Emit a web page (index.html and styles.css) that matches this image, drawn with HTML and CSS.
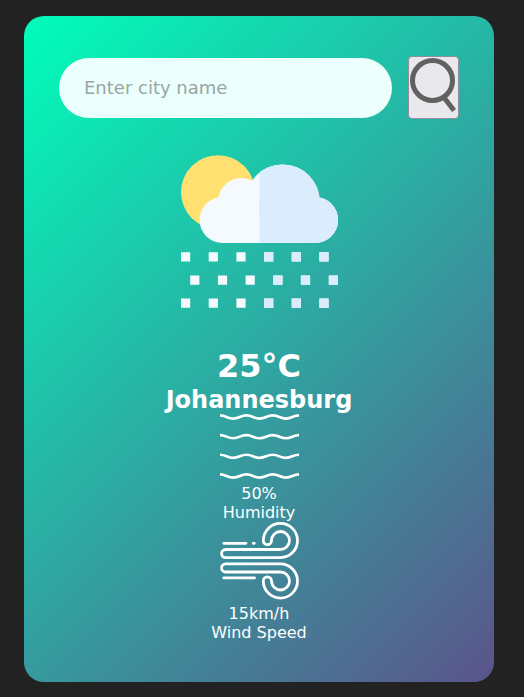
FILE: index.html
```
<!DOCTYPE html>
<html lang="en">
<head>
<meta charset="utf-8">
<title>Weather</title>
<link rel="stylesheet" href="styles.css">
</head>
<body>
<main class="card">
  <form class="search">
    <input class="search-input" type="text" placeholder="Enter city name">
    <button class="search-button" type="button" aria-label="Search">
      <svg width="49" height="61" viewBox="409 57 49 61" fill="none" stroke="#616161" stroke-width="5">
        <circle cx="432.5" cy="80.5" r="20"/>
        <path d="M444 97.5 454 110.5"/>
      </svg>
    </button>
  </form>
  <section class="weather">
    <svg class="weather-icon" viewBox="181 155 157 153">
      <defs>
        <clipPath id="right"><rect x="259.5" y="150" width="90" height="170"/></clipPath>
        <g id="rain">
          <circle cx="222.5" cy="220" r="23"/>
          <circle cx="241.2" cy="201.3" r="23.2"/>
          <circle cx="282.6" cy="201.7" r="37.2"/>
          <circle cx="315.2" cy="220" r="22.9"/>
          <rect x="222.5" y="205" width="93" height="38"/>
          <path d="M181 252.3h9.2v9.3h-9.2zM208.7 252.3h9.2v9.3h-9.2zM236.4 252.3h9.2v9.3h-9.2zM264.1 252.3h9.2v9.3h-9.2zM291.7 252.3h9.2v9.3h-9.2zM319.4 252.3h9.2v9.3h-9.2z"/>
          <path d="M190.2 275.4h9.2v9.3h-9.2zM217.9 275.4h9.2v9.3h-9.2zM245.6 275.4h9.2v9.3h-9.2zM273.3 275.4h9.2v9.3h-9.2zM300.9 275.4h9.2v9.3h-9.2zM328.8 275.4h9.2v9.3h-9.2z"/>
          <path d="M181 298.4h9.2v9.3h-9.2zM208.7 298.4h9.2v9.3h-9.2zM236.4 298.4h9.2v9.3h-9.2zM264.1 298.4h9.2v9.3h-9.2zM291.7 298.4h9.2v9.3h-9.2zM319.4 298.4h9.2v9.3h-9.2z"/>
        </g>
      </defs>
      <circle cx="218" cy="192.2" r="37" fill="#ffe070"/>
      <use href="#rain" fill="#f5fafe"/>
      <use href="#rain" fill="#dbedfd" clip-path="url(#right)"/>
    </svg>
    <h1 class="temp">25°C</h1>
    <h2 class="city">Johannesburg</h2>
    <div class="details">
      <div class="detail">
        <svg class="humidity-icon" viewBox="220 413 79 67" fill="none" stroke="#fff" stroke-width="2.6">
          <defs><path id="wave" d="M220 415.4C226 415.4 227 418.6 233.2 418.6S240.3 415.4 246.4 415.4 253.4 418.6 259.5 418.6 266.6 415.4 272.7 415.4 279.8 418.6 285.8 418.6 293 415.4 299 415.4"/></defs>
          <use href="#wave"/>
          <use href="#wave" y="19.7"/>
          <use href="#wave" y="39.3"/>
          <use href="#wave" y="59"/>
        </svg>
        <p>50%</p>
        <p>Humidity</p>
      </div>
      <div class="detail">
        <svg class="wind-icon" viewBox="220 521 79 79" fill="none" stroke="#fff" stroke-width="2.8" stroke-linecap="round">
          <path d="M225.6 549.5H280.5A9 9 0 1 0 271.5 540.5A4.1 4.1 0 0 1 263.3 540.5A17.1 17.1 0 1 1 280.5 557.6H225.6A4.05 4.05 0 0 1 225.6 549.5Z"/>
          <path d="M225.6 572H280.5A9 9 0 1 1 271.5 581A4.1 4.1 0 0 0 263.3 581A17.1 17.1 0 1 0 280.5 563.9H225.6A4.05 4.05 0 0 0 225.6 572Z"/>
          <path d="M223.8 543.3H246M253.3 543.3H254.3M223.8 577.9H254.5"/>
        </svg>
        <p>15km/h</p>
        <p>Wind Speed</p>
      </div>
    </div>
  </section>
</main>
</body>
</html>
```
FILE: styles.css
```
* {
  margin: 0;
  padding: 0;
  box-sizing: border-box;
  font-family: "DejaVu Sans", sans-serif;
}

body {
  background: #222;
}

.card {
  width: 470px;
  height: 666px;
  margin: 16px 0 0 24px;
  padding: 40px 35px;
  border-radius: 20px;
  background: linear-gradient(135deg, #00feba, #5b548a);
  color: #fff;
  text-align: center;
}

.search {
  display: flex;
  align-items: flex-start;
  justify-content: space-between;
  height: 64px;
}

.search-input {
  width: 333px;
  height: 60px;
  margin-top: 2px;
  padding: 9px 25px 11px;
  border: 0;
  outline: 0;
  border-radius: 30px;
  background: #ebfffc;
  color: #555;
  font-size: 18px;
}

.search-input::placeholder {
  color: #9aa5a3;
}

.search-button {
  width: 51px;
  height: 63px;
  border: 1px solid #8f8f9d;
  border-radius: 4px;
  background: #e9e9ed;
}

.search-button svg,
.weather svg {
  display: block;
}

.weather {
  display: flex;
  flex-direction: column;
  align-items: center;
  padding-top: 35px;
}

.weather-icon {
  width: 157px;
  height: 153px;
  margin-left: 1px;
}

.temp {
  margin-top: 39px;
  font-size: 32px;
  line-height: 38px;
}

.city {
  font-size: 24px;
  line-height: 30px;
  margin-bottom: -2px;
}

.detail {
  display: flex;
  flex-direction: column;
  align-items: center;
  font-size: 16px;
  line-height: 19px;
}

.humidity-icon {
  width: 79px;
  height: 67px;
  margin: 0 0 4px 1px;
}

.wind-icon {
  width: 79px;
  height: 79px;
  margin: -1px 0 4px 1px;
}
```
